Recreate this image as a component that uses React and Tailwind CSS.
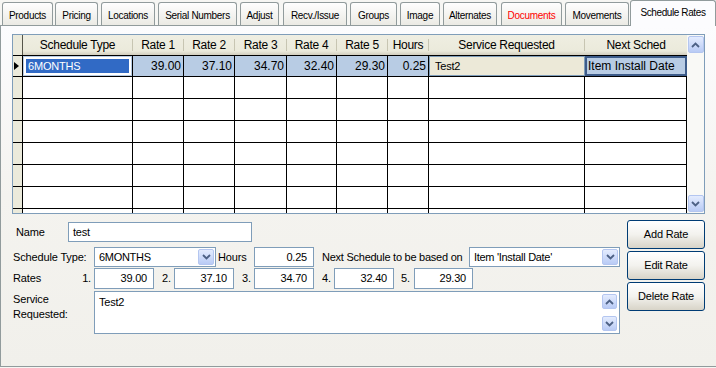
import React from "react";

const F = "font-['Liberation_Sans',Arial,sans-serif]";

const tabs = [
  { l: "Products", c: "ml-[2px] w-[51px]" },
  { l: "Pricing", c: "ml-[2px] w-[43px]" },
  { l: "Locations", c: "ml-[3px] w-[54px]" },
  { l: "Serial Numbers", c: "ml-[3px] w-[79px]" },
  { l: "Adjust", c: "ml-[3px] w-[39px]" },
  { l: "Recv./Issue", c: "ml-[4px] w-[64px]" },
  { l: "Groups", c: "ml-[3px] w-[47px]" },
  { l: "Image", c: "ml-[3px] w-[40px]" },
  { l: "Alternates", c: "ml-[3px] w-[54px]" },
  { l: "Documents", c: "ml-[4px] w-[61px] text-[#ff0000]" },
  { l: "Movements", c: "ml-[3px] w-[64px]" },
];

function Chevron({ up }) {
  return (
    <svg width="9" height="6" viewBox="0 0 9 6">
      <path
        d={up ? "M1 5 L4.5 1.5 L8 5" : "M1 1 L4.5 4.5 L8 1"}
        stroke="#4d6185"
        strokeWidth="1.8"
        fill="none"
      />
    </svg>
  );
}

function XpBtn({ up, className }) {
  return (
    <div
      className={`flex items-center justify-center rounded-[2px] border border-[#b4c6f0] bg-linear-to-b from-[#e4ecfe] to-[#b9cbf5] ${className}`}
    >
      <Chevron up={up} />
    </div>
  );
}

const cols = [
  { w: "w-[110px]", h: "Schedule Type" },
  { w: "w-[51px]", h: "Rate 1" },
  { w: "w-[51px]", h: "Rate 2" },
  { w: "w-[52px]", h: "Rate 3" },
  { w: "w-[50px]", h: "Rate 4" },
  { w: "w-[51px]", h: "Rate 5" },
  { w: "w-[41px]", h: "Hours" },
  { w: "w-[156px]", h: "Service Requested" },
  { w: "w-[102px]", h: "Next Sched" },
];

function Grid() {
  const rates = ["39.00", "37.10", "34.70", "32.40", "29.30", "0.25"];
  return (
    <div className="w-[693px] h-[180px] border border-[#7f9db9] flex bg-white">
      <div className="w-[674px] h-[178px] flex flex-col overflow-hidden">
        {/* header */}
        <div className="flex h-[20px] shrink-0 bg-linear-to-b from-[#efeee2] via-[#ebeadb] via-80% to-[#d2cebf] text-[12px] tracking-[-0.3px]">
          <div className="w-[10px] border-r border-[#55554a] bg-[#ebeadb]" />
          {cols.map((c, i) => (
            <div key={i} className={`${c.w} flex items-center`}>
              <span className="flex-1 text-center leading-[18px]">{c.h}</span>
              {i < cols.length - 1 && (
                <span className="w-px h-[12px] bg-[#c7c5b2]" />
              )}
            </div>
          ))}
        </div>
        {/* row 1 */}
        <div className="flex h-[22px] shrink-0 border-y border-black text-[12px]">
          <div className="w-[10px] bg-[#ebeadb] border-r border-black flex items-center pl-[1px]">
            <svg width="5" height="8" viewBox="0 0 5 8">
              <path d="M0 0 L5 4 L0 8 Z" fill="#000" />
            </svg>
          </div>
          <div className="w-[110px] bg-[#b8cce4] border-r border-black p-[1px]">
            <div className="h-full border-2 border-white bg-[#316ac5] text-white text-[11px] tracking-[-0.2px] flex items-center pl-[2px]">
              6MONTHS
            </div>
          </div>
          {rates.map((r, i) => (
            <div
              key={i}
              className={`${cols[i + 1].w} bg-[#b8cce4] border-r border-black flex items-center justify-end pr-[2px]`}
            >
              {r}
            </div>
          ))}
          <div className="w-[156px] bg-[#ece9d8] border border-[#7f9db9] flex items-center pl-[5px] text-[11px] tracking-[-0.2px]">
            Test2
          </div>
          <div className="w-[102px] bg-[#b8cce4] border-2 border-[#3d5c8a] flex items-center pl-[1px]">
            Item Install Date
          </div>
        </div>
        {[0, 1, 2, 3, 4, 5, 6].map((r) => (
          <div key={r} className="flex h-[22px] shrink-0 border-b border-black">
            <div className="w-[10px] bg-[#ebeadb] border-r border-black" />
            {cols.map((c, i) => (
              <div key={i} className={`${c.w} border-r border-black`} />
            ))}
          </div>
        ))}
      </div>
      <div className="w-[17px] flex flex-col justify-between items-center bg-[#f9f9f6] py-[1px]">
        <XpBtn up className="w-[16px] h-[17px]" />
        <XpBtn className="w-[16px] h-[17px]" />
      </div>
    </div>
  );
}

function Input({ children, className = "", right }) {
  return (
    <div
      className={`h-[20px] border border-[#7f9db9] bg-white flex items-center text-[11px] tracking-[-0.2px] ${
        right ? "justify-end pr-[6px]" : "pl-[4px]"
      } ${className}`}
    >
      {children}
    </div>
  );
}

function Select({ children, className = "" }) {
  return (
    <div
      className={`h-[20px] border border-[#7f9db9] bg-white flex items-center text-[11px] tracking-[-0.3px] ${className}`}
    >
      <span className="flex-1 pl-[4px]">{children}</span>
      <XpBtn className="w-[16px] h-[16px] mr-[1px]" />
    </div>
  );
}

function Button({ children }) {
  return (
    <div className="h-[29px] w-[78px] rounded-[3px] border border-[#003c74] bg-linear-to-b from-[#ffffff] via-[#f3f2ee] to-[#d8d4c8] flex items-center justify-center text-[11px] tracking-[-0.2px]">
      {children}
    </div>
  );
}

function Form() {
  return (
    <div className="flex mt-[6px] text-[11px] tracking-[-0.15px]">
      <div className="w-[607px] ml-[1px] pt-[2px] flex flex-col">
        <div className="flex items-center h-[20px]">
          <span className="w-[55px] pl-[3px]">Name</span>
          <Input className="w-[184px]">test</Input>
        </div>
        <div className="flex items-center h-[20px] mt-[5px]">
          <span className="w-[81px]">Schedule Type:</span>
          <Select className="w-[122px]">6MONTHS</Select>
          <span className="ml-[2px] w-[36px]">Hours</span>
          <Input right className="w-[60px]">
            0.25
          </Input>
          <span className="ml-[8px] w-[147px] tracking-[-0.25px]">Next Schedule to be based on</span>
          <Select className="w-[151px]">Item 'Install Date'</Select>
        </div>
        <div className="flex items-center h-[21px] mt-[1px]">
          <span className="w-[81px] flex justify-between pr-[3px]">
            <span>Rates</span>
            <span>1.</span>
          </span>
          <Input right className="w-[60px] h-[21px]">39.00</Input>
          <span className="w-[20px] pl-[8px]">2.</span>
          <Input right className="w-[60px] h-[21px]">37.10</Input>
          <span className="w-[20px] pl-[8px]">3.</span>
          <Input right className="w-[60px] h-[21px]">34.70</Input>
          <span className="w-[20px] pl-[8px]">4.</span>
          <Input right className="w-[60px] h-[21px]">32.40</Input>
          <span className="w-[20px] pl-[7px]">5.</span>
          <Input right className="w-[59px] h-[21px]">29.30</Input>
        </div>
        <div className="flex h-[43px] mt-[2px]">
          <div className="w-[81px] pt-[1px] leading-[15px]">
            Service
            <br />
            Requested:
          </div>
          <div className="w-[526px] h-[43px] border border-[#7f9db9] bg-white flex">
            <div className="flex-1 pl-[4px] pt-[3px] leading-[14px] tracking-[-0.2px]">Test2</div>
            <div className="w-[15px] mr-[2px] flex flex-col justify-between py-[2px]">
              <XpBtn up className="w-[15px] h-[15px]" />
              <XpBtn className="w-[15px] h-[15px]" />
            </div>
          </div>
        </div>
      </div>
      <div className="ml-[7px] flex flex-col gap-[2px]">
        <Button>Add Rate</Button>
        <Button>Edit Rate</Button>
        <Button>Delete Rate</Button>
      </div>
    </div>
  );
}

export default function App() {
  return (
    <div className={`w-[716px] h-[368px] overflow-hidden bg-[#f6f6f3] text-black ${F}`}>
      <div className="flex items-end h-[25px]">
        {tabs.map((t, i) => (
          <div
            key={i}
            className={`h-[23px] shrink-0 flex items-center justify-center rounded-t-[3px] border border-b-0 border-[#919b9c] bg-linear-to-b from-[#fefefe] to-[#ebeae4] text-[10px] tracking-[-0.3px] pt-[2px] ${t.c}`}
          >
            {t.l}
          </div>
        ))}
        <div className="relative z-10 -mb-px ml-[1px] w-[86px] h-[26px] shrink-0 flex items-center justify-center rounded-t-[3px] border border-b-0 border-[#919b9c] bg-[#fcfcfe] text-[10px] tracking-[-0.4px] pb-[2px]">
          Schedule Rates
        </div>
      </div>
      <div className="w-[718px] h-[342px] border border-[#919b9c] bg-linear-to-b from-[#fcfcfe] via-[#f4f3ef] to-[#f1f0eb] pl-[11px] pt-[8px]">
        <Grid />
        <Form />
      </div>
    </div>
  );
}
